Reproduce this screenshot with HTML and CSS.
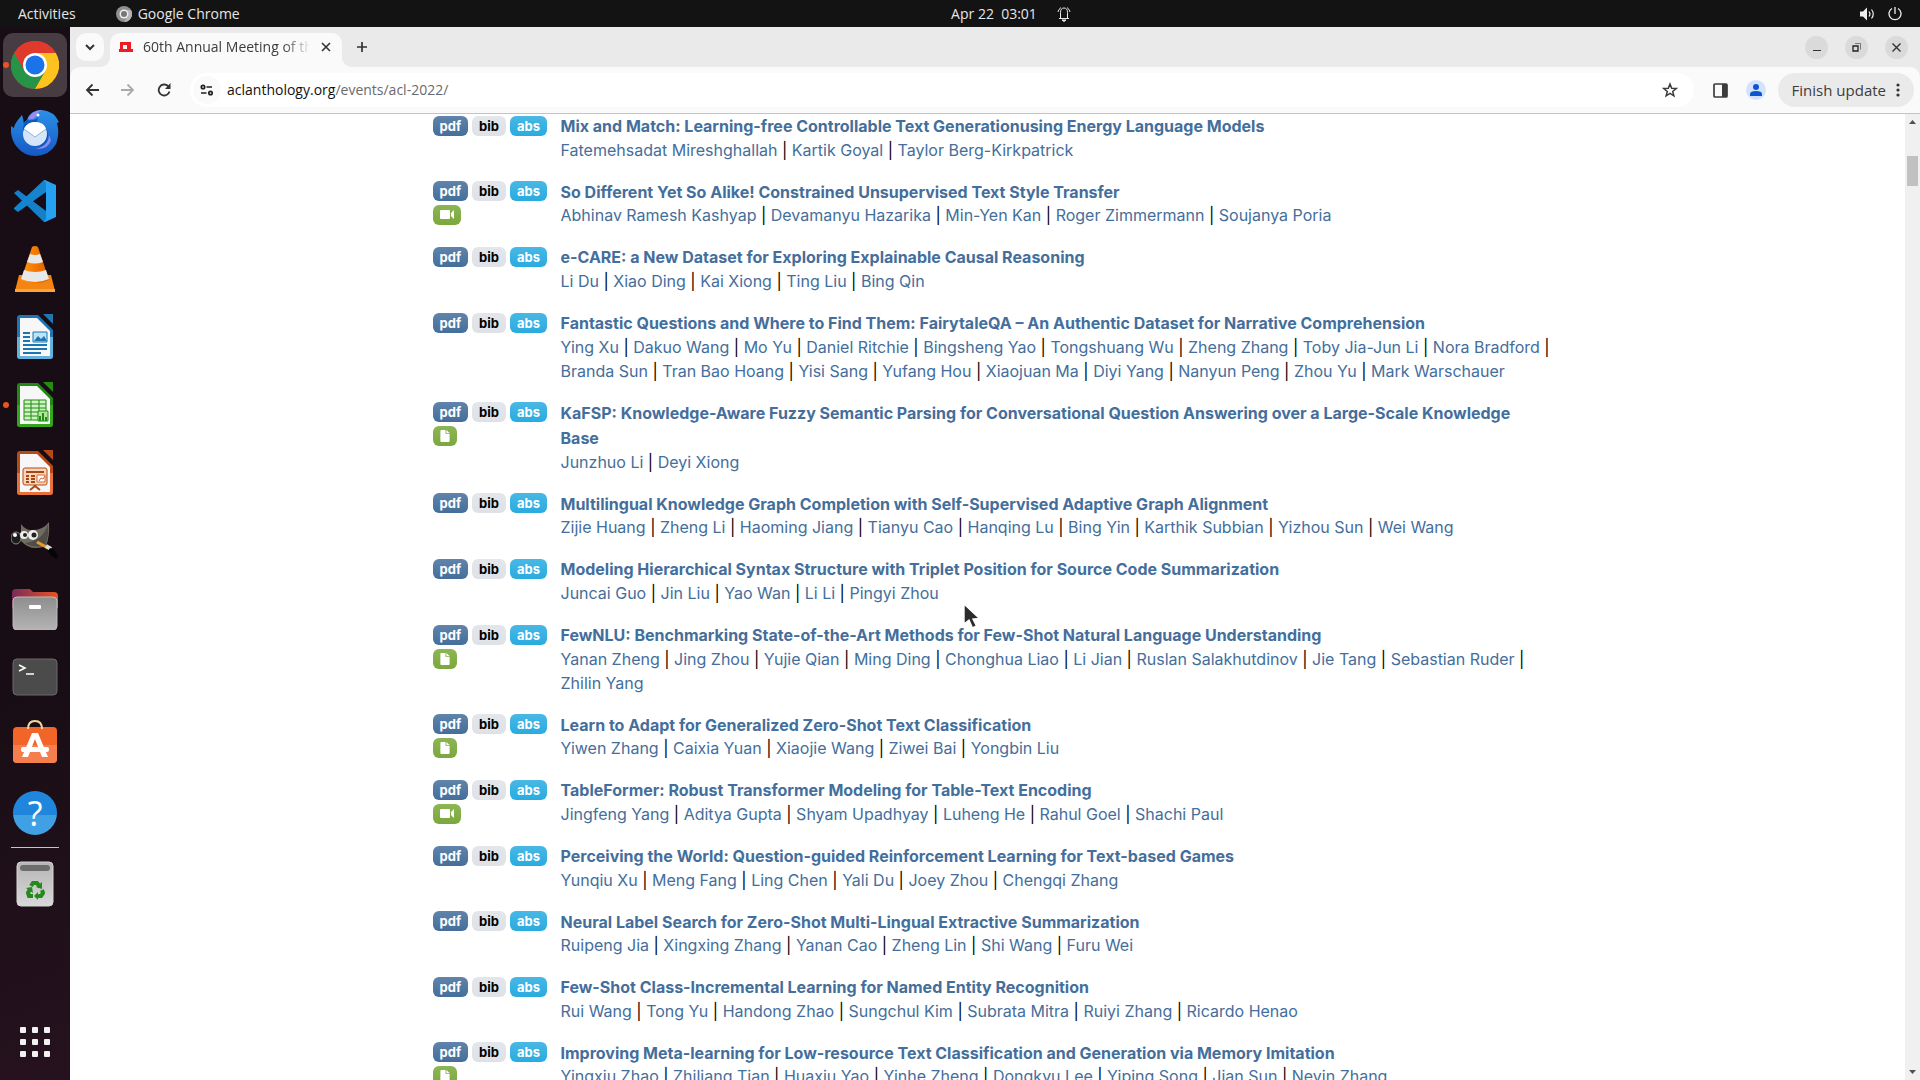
FILE: index.html
```
<!DOCTYPE html>
<html lang="en">
<head>
    <meta charset="UTF-8">
    <meta name="viewport" content="width=device-width, initial-scale=1.0">
    <title>60th Annual Meeting of the Association for Computational Linguistics</title>
    <link rel="stylesheet" href="styles.css">
</head>
<body>
    <!-- shared icons -->
    <svg class="defs" width="0" height="0">
        <symbol id="video" viewBox="0 0 14 12"><path d="M1 1h8a1 1 0 0 1 1 1v7a1 1 0 0 1-1 1H1a1 1 0 0 1-1-1V2a1 1 0 0 1 1-1zM11 4l3-3v9l-3-3z" fill="#fff"/></symbol>
        <symbol id="file" viewBox="0 0 10 13"><path d="M1 0h4.500v4H10v8a1 1 0 0 1-1 1H1a1 1 0 0 1-1-1V1a1 1 0 0 1 1-1zM6.500 0L10 3.200H6.500z" fill="#fff"/></symbol>
        <linearGradient id="gBlue" x2="0" y2="1"><stop offset="0" stop-color="#2a90e8"/><stop offset="1" stop-color="#1659c4"/></linearGradient>
        <linearGradient id="gGrey" x2="0" y2="1"><stop offset="0" stop-color="#8e8e8e"/><stop offset="1" stop-color="#b4b4b4"/></linearGradient>
        <linearGradient id="gFolder"><stop offset="0" stop-color="#7a2a5c"/><stop offset="1" stop-color="#e95420"/></linearGradient>
        <linearGradient id="gBin" x2="0" y2="1"><stop offset="0" stop-color="#b5b5b5"/><stop offset="1" stop-color="#d8d8d8"/></linearGradient>
        <linearGradient id="gCone"><stop offset="0" stop-color="#ff9a1a"/><stop offset=".5" stop-color="#f57900"/><stop offset="1" stop-color="#d95f00"/></linearGradient>
    </svg>

    <header class="topbar">
        <div class="topbar-left">
            <button class="plain">Activities</button>
            <button class="plain app-menu">
                <svg width="16" height="16" viewBox="0 0 16 16"><circle cx="8" cy="8" r="8" fill="#8f8f8f"/><path d="M8 4h7a8 8 0 0 1-7 12l4-6z" fill="#b5b5b5"/><circle cx="8" cy="8" r="4.500" fill="#eee"/><circle cx="8" cy="8" r="3" fill="#777"/></svg>
                Google Chrome
            </button>
        </div>
        <button class="plain clock">
            <span>Apr 22&nbsp; 03:01</span>
            <svg width="14" height="16" viewBox="0 0 14 16" fill="none" stroke="#e8e8e8"><path d="M2 12.500h10M3.500 12V6.500a3.500 4.500 0 0 1 7 0V12M1 6a7 7 0 0 1 3-4.500M13 6a7 7 0 0 0-3-4.500"/><path d="M5 14h4l-2 1.500z" fill="#e8e8e8"/></svg>
        </button>
        <button class="plain status" aria-label="System menu">
            <svg width="16" height="14" viewBox="0 0 16 14" fill="none" stroke="#eee"><path d="M0 4.500h3l4-4v13l-4-4H0z" fill="#eee" stroke="none"/><path d="M9 4.500q2 2.500 0 5M11.500 2.500q3.500 4.500 0 9" stroke-width="1.200"/></svg>
            <svg width="14" height="14" viewBox="0 0 14 14" fill="none" stroke="#eee" stroke-width="1.300"><path d="M4 1.500a6 6 0 1 0 6 0M7 0v7"/></svg>
        </button>
    </header>

    <div class="desktop">
        <nav class="dock">
            <button class="tile active running" aria-label="Google Chrome">
                <svg width="48" height="48" viewBox="0 0 48 48"><circle cx="24" cy="24" r="24" fill="#e33b2e"/><path d="M3.200 12A24 24 0 0 0 24 48l10.400-18L24 24z" fill="#259447"/><path d="M44.800 12A24 24 0 0 1 24 48l10.400-18L24 12z" fill="#fcc31e"/><path d="M3.200 12A24 24 0 0 1 44.800 12H24L13.600 30z" fill="#e03a2d"/><circle cx="24" cy="24" r="12" fill="#fff"/><circle cx="24" cy="24" r="9.500" fill="#1a73e8"/></svg>
            </button>
            <button class="tile" aria-label="Thunderbird">
                <svg width="48" height="48" viewBox="0 0 48 48"><path d="M11 6Q3 15 3 19L0 17Q-1 30 6 38Q13 47 25 47Q39 46 45 35Q49 25 46 14L48 13Q43 2 31 1Q19 1 16 11Q10 15 12 22Q14 14 11 6z" fill="url(#gBlue)"/><path d="M17 10Q21 1 31 1Q26 3 25 8Q22 11 17 10z" fill="#9a8af0"/><path d="M16 11Q24 12 27 8L26 13L34 18Q39 24 36 32Q31 41 20 35Q12 29 12 21Q12 14 16 11z" fill="#0d58bd"/><path d="M38 26Q38 37 24 40Q37 41 40 31z" fill="#8d8cf0"/><circle cx="24" cy="25" r="12" fill="#d5e6fa"/><path d="M13 20L24 28L35 20Q33 13 24 13Q16 13 13 20z" fill="#fff"/><path d="M13 20L24 28L35 20" fill="none" stroke="#8cb3df"/><circle cx="27" cy="6" r="1.500" fill="#fff"/></svg>
            </button>
            <button class="tile" aria-label="Visual Studio Code">
                <svg width="42" height="42" viewBox="0 0 42 42"><path d="M0 13L4 10L32 31V41L30 42z" fill="#1580c8"/><path d="M0 28L30 0L32 1V12L4 32L0 29z" fill="#1584ce"/><path d="M30 0L31 0L42 5V37L31 42L30 42L32 39V3z" fill="#26a0f0"/></svg>
            </button>
            <button class="tile" aria-label="VLC">
                <svg width="40" height="46" viewBox="0 0 40 46"><path d="M4 29h32l4 16H0z" fill="#f58513"/><path d="M0 43h40v3H0z" fill="#ffa43c"/><path d="M17 1q3-2 6 0l11 33q-14 7-28 0z" fill="url(#gCone)"/><path d="M15 8q5 2 10 0l3 8q-8 3-16 0zM9 24q11 4 22 0l3 9q-14 6-28 0z" fill="#e8e8e8"/></svg>
            </button>
            <button class="tile" aria-label="LibreOffice Writer">
                <svg width="38" height="46" viewBox="0 0 38 46"><path d="M4 1h18l15 15v26q0 3-3 3H4q-3 0-3-3V4q0-3 3-3z" fill="#1c76b5"/><path d="M1 23h36v19q0 3-3 3H4q-3 0-3-3z" fill="#63b2dd"/><path d="M4 4h17l13 13v25H4z" fill="#f7f7f7"/><path d="M27 0h10v10z" fill="#2377b1"/><path d="M7 19h7M7 23h7M7 27h7M7 31h24M7 35h24M7 39h18" stroke="#1d74b3" stroke-width="2"/><path d="M17 18h14v10H17z" fill="#bce3f8" stroke="#1d74b3"/><path d="M18 27l4-5 3 3 3-3 3 5z" fill="#1d74b3"/></svg>
            </button>
            <button class="tile running" aria-label="LibreOffice Calc">
                <svg width="38" height="46" viewBox="0 0 38 46"><path d="M4 1h18l15 15v26q0 3-3 3H4q-3 0-3-3V4q0-3 3-3z" fill="#228a10"/><path d="M1 23h36v19q0 3-3 3H4q-3 0-3-3z" fill="#35a51c"/><path d="M4 4h17l13 13v25H4z" fill="#f7f7f7"/><path d="M27 0h10v10z" fill="#278d11"/><path d="M8 18h22v20H8zM8 22h22M8 26h22M8 30h22M8 34h22M15 18v20M23 18v20" fill="#cff2c2" stroke="#238c13"/><path d="M22 29h10v10H22z" fill="#aee69a" stroke="#238c13"/><path d="M24 39v-5M27 39v-8M30 39v-4" stroke="#238c13" stroke-width="2"/></svg>
            </button>
            <button class="tile" aria-label="LibreOffice Impress">
                <svg width="38" height="46" viewBox="0 0 38 46"><path d="M4 1h18l15 15v26q0 3-3 3H4q-3 0-3-3V4q0-3 3-3z" fill="#b84a14"/><path d="M1 23h36v19q0 3-3 3H4q-3 0-3-3z" fill="#e8703a"/><path d="M4 4h17l13 13v25H4z" fill="#f7f7f7"/><path d="M27 0h10v10z" fill="#b34b19"/><rect x="7" y="18" width="24" height="17" rx="2" fill="#f8d5bb" stroke="#b34b19"/><path d="M10 22h18M14 40l5-4 5 4M19 35v2" fill="none" stroke="#a94614" stroke-width="2"/><path d="M10 26h3M10 29h3M10 32h3M15 26h4M15 29h4M15 32h4" stroke="#a94614" stroke-width="2"/><path d="M21 25h8v7h-8z" fill="#fff" stroke="#d46a33"/><path d="M23 31l2-3 2 1 2-3" fill="none" stroke="#d46a33"/></svg>
            </button>
            <button class="tile" aria-label="GIMP">
                <svg width="48" height="40" viewBox="0 0 48 40"><path d="M10 3Q15 10 22 9Q32 9 38 1Q39 15 35 25Q20 31 10 20z" fill="#6f6c62"/><path d="M37 3Q38 16 34 24Q23 28 14 22Q32 20 37 3z" fill="#504d46"/><ellipse cx="5" cy="17" rx="5" ry="6" fill="#1c1c1c" stroke="#888"/><circle cx="4" cy="14" r="2" fill="#fff"/><circle cx="13" cy="14" r="4" fill="#eee"/><circle cx="14" cy="14" r="2" fill="#222"/><circle cx="22" cy="14" r="5" fill="#eee"/><circle cx="23" cy="14" r="2.500" fill="#222"/><path d="M26 21l11 6" stroke="#ed9a25" stroke-width="3"/><path d="M35 25l5 3" stroke="#ddd" stroke-width="4"/><path d="M39 27q7 1 8 11q-8-2-10-8z" fill="#050505"/></svg>
            </button>
            <button class="tile" aria-label="Files">
                <svg width="46" height="42" viewBox="0 0 46 42"><path d="M4 1h14l3 3h21q4 0 4 4v12H0V5q0-4 4-4z" fill="url(#gFolder)"/><rect x="1" y="9" width="44" height="33" rx="4" fill="url(#gGrey)" stroke="#bbb"/><rect x="17" y="17" width="12" height="4" rx="1" fill="#fff"/></svg>
            </button>
            <button class="tile" aria-label="Terminal">
                <svg width="46" height="38" viewBox="0 0 46 38"><rect x="1" y="1" width="44" height="36" rx="4" fill="#4b4b4b" stroke="#6b6b6b"/><path d="M7 7l6 3-6 3M14 16h8" fill="none" stroke="#fff" stroke-width="1.500"/></svg>
            </button>
            <button class="tile" aria-label="Ubuntu Software">
                <svg width="46" height="50" viewBox="0 0 46 50"><rect x="1" y="7" width="44" height="36" rx="4" fill="#f16529"/><path d="M1 25h44v14q0 4-4 4H5q-4 0-4-4z" fill="#f47f4d"/><path d="M16 9q0-8 7-8t7 8" fill="none" stroke="#f3d9a0" stroke-width="2"/><path d="M20 13h6l10 24h-6L23 19l-7 18h-6z" fill="#fff"/><rect x="9" y="27" width="28" height="5" rx="2" fill="#fff"/></svg>
            </button>
            <button class="tile help" aria-label="Help">?</button>
            <hr>
            <button class="tile" aria-label="Trash">
                <svg width="38" height="46" viewBox="0 0 38 46"><rect x="1" y="1" width="36" height="44" rx="4" fill="url(#gBin)" stroke="#d5d5d5"/><rect x="4" y="4" width="30" height="6" rx="3" fill="#6d6d6d"/><g fill="none" stroke="#26891c" stroke-width="4"><path d="M15 25l2-3h4l3 4"/><path d="M26 29l1 3-2 3h-4"/><path d="M17 35h-4l-1-3 2-4"/></g><path d="M26 21v7l-6-2zM22 31v8l-4-4zM10 27l6-1 1 6z" fill="#26891c"/></svg>
            </button>
            <button class="tile apps" aria-label="Show Applications">
                <svg width="30" height="30" viewBox="0 0 30 30" fill="#f2f2f2"><rect width="6" height="6" rx="1"/><rect x="12" width="6" height="6" rx="1"/><rect x="24" width="6" height="6" rx="1"/><rect y="12" width="6" height="6" rx="1"/><rect x="12" y="12" width="6" height="6" rx="1"/><rect x="24" y="12" width="6" height="6" rx="1"/><rect y="24" width="6" height="6" rx="1"/><rect x="12" y="24" width="6" height="6" rx="1"/><rect x="24" y="24" width="6" height="6" rx="1"/></svg>
            </button>
        </nav>

        <div class="window">
            <div class="tabstrip">
                <button class="tab-search" aria-label="Search tabs"><svg width="10" height="8" viewBox="0 0 10 8"><path d="M1 2l4 4 4-4" fill="none" stroke="#333" stroke-width="2"/></svg></button>
                <div class="tab">
                    <svg width="14" height="10" viewBox="0 0 14 10"><path d="M1 0h11v7h2v3H0V7h1zM4 3v4h4V3z" fill="#ed1c24" fill-rule="evenodd"/></svg>
                    <span class="tab-title">60th Annual Meeting of the Association</span>
                    <button class="plain" aria-label="Close tab"><svg width="10" height="10" viewBox="0 0 10 10"><path d="M1 1l8 8M9 1L1 9" stroke="#333" stroke-width="1.600"/></svg></button>
                </div>
                <button class="plain new-tab" aria-label="New tab"><svg width="12" height="12" viewBox="0 0 12 12"><path d="M6 1v10M1 6h10" stroke="#333" stroke-width="1.700"/></svg></button>
                <div class="window-buttons">
                    <button aria-label="Minimize"><svg width="9" height="9" viewBox="0 0 9 9"><path d="M1 7.500h8" stroke="#333"/></svg></button>
                    <button aria-label="Restore"><svg width="9" height="9" viewBox="0 0 9 9" fill="none"><path d="M1 3h5v5H1z" stroke="#222" stroke-width="1.300"/><path d="M3 .500h5.500v6" stroke="#777"/></svg></button>
                    <button aria-label="Close"><svg width="9" height="9" viewBox="0 0 9 9"><path d="M.500 .500l8 8M8.500 .500l-8 8" stroke="#333" stroke-width="1.400"/></svg></button>
                </div>
            </div>

            <div class="toolbar">
                <button class="plain nav" aria-label="Back"><svg width="14" height="14" viewBox="0 0 14 14"><path d="M14 7H2M7.500 1.500L2 7l5.500 5.500" fill="none" stroke="#333" stroke-width="1.800"/></svg></button>
                <button class="plain nav" aria-label="Forward"><svg width="14" height="14" viewBox="0 0 14 14"><path d="M0 7h12M6.500 1.500L12 7l-5.500 5.500" fill="none" stroke="#aaa" stroke-width="1.800"/></svg></button>
                <button class="plain nav" aria-label="Reload"><svg width="14" height="14" viewBox="0 0 14 14"><path d="M12.500 8.500A5.500 5.500 0 1 1 11 3l1.500 2" fill="none" stroke="#333" stroke-width="1.800"/><path d="M13.500 0v6H8z" fill="#333"/></svg></button>
                <div class="omnibox">
                    <button class="site-info" aria-label="View site information"><svg width="14" height="12" viewBox="0 0 14 12" fill="none" stroke="#1f1f1f" stroke-width="1.700"><circle cx="3" cy="3" r="1.700"/><path d="M6.500 3H12M1 9h5.500"/><circle cx="10.500" cy="9" r="1.700"/></svg></button>
                    <a class="url" href="#"><b>aclanthology.org</b>/events/acl-2022/</a>
                    <button class="plain star" aria-label="Bookmark this tab"><svg width="16" height="16" viewBox="0 0 16 16"><path d="M8 2l1.700 4.200 4.500.300-3.500 2.900 1.200 4.400L8 11.400l-3.900 2.400 1.200-4.400-3.500-2.900 4.500-.300z" fill="none" stroke="#3c3c3c" stroke-width="1.500"/></svg></button>
                </div>
                <button class="plain panel" aria-label="Side panel"><svg width="15" height="15" viewBox="0 0 15 15"><rect x="1" y="1" width="13" height="13" rx="1" fill="none" stroke="#3c3c3c" stroke-width="1.700"/><path d="M9 1h5v13H9z" fill="#3c3c3c"/></svg></button>
                <button class="plain" aria-label="Profile"><svg width="20" height="20" viewBox="0 0 20 20"><circle cx="10" cy="10" r="10" fill="#d3e3fd"/><circle cx="10" cy="7" r="3" fill="#0b57d0"/><path d="M4 16v-2q0-3 6-3t6 3v2z" fill="#0b57d0"/></svg></button>
                <button class="update">Finish update <svg width="4" height="14" viewBox="0 0 4 14" fill="#333"><circle cx="2" cy="2" r="1.600"/><circle cx="2" cy="7" r="1.600"/><circle cx="2" cy="12" r="1.600"/></svg></button>
            </div>

            <div class="viewport">
                <main class="page">
                    <div class="container">
                        <div class="paper">
                            <div class="badges"><a class="badge pdf" href="#">pdf</a><a class="badge bib" href="#">bib</a><a class="badge abs" href="#">abs</a></div>
                            <div class="info"><strong><a href="#">Mix and Match: Learning-free Controllable Text Generationusing Energy Language Models</a></strong><br><a href="#">Fatemehsadat Mireshghallah</a> | <a href="#">Kartik Goyal</a> | <a href="#">Taylor Berg-Kirkpatrick</a></div>
                        </div>
                        <div class="paper">
                            <div class="badges"><a class="badge pdf" href="#">pdf</a><a class="badge bib" href="#">bib</a><a class="badge abs" href="#">abs</a><br><a class="badge att" href="#" aria-label="video"><svg width="14" height="12"><use href="#video"/></svg></a></div>
                            <div class="info"><strong><a href="#">So Different Yet So Alike! Constrained Unsupervised Text Style Transfer</a></strong><br><a href="#">Abhinav Ramesh Kashyap</a> | <a href="#">Devamanyu Hazarika</a> | <a href="#">Min-Yen Kan</a> | <a href="#">Roger Zimmermann</a> | <a href="#">Soujanya Poria</a></div>
                        </div>
                        <div class="paper">
                            <div class="badges"><a class="badge pdf" href="#">pdf</a><a class="badge bib" href="#">bib</a><a class="badge abs" href="#">abs</a></div>
                            <div class="info"><strong><a href="#">e-CARE: a New Dataset for Exploring Explainable Causal Reasoning</a></strong><br><a href="#">Li Du</a> | <a href="#">Xiao Ding</a> | <a href="#">Kai Xiong</a> | <a href="#">Ting Liu</a> | <a href="#">Bing Qin</a></div>
                        </div>
                        <div class="paper">
                            <div class="badges"><a class="badge pdf" href="#">pdf</a><a class="badge bib" href="#">bib</a><a class="badge abs" href="#">abs</a></div>
                            <div class="info"><strong><a href="#">Fantastic Questions and Where to Find Them: FairytaleQA – An Authentic Dataset for Narrative Comprehension</a></strong><br><a href="#">Ying Xu</a> | <a href="#">Dakuo Wang</a> | <a href="#">Mo Yu</a> | <a href="#">Daniel Ritchie</a> | <a href="#">Bingsheng Yao</a> | <a href="#">Tongshuang Wu</a> | <a href="#">Zheng Zhang</a> | <a href="#">Toby Jia-Jun Li</a> | <a href="#">Nora Bradford</a> | <a href="#">Branda Sun</a> | <a href="#">Tran Bao Hoang</a> | <a href="#">Yisi Sang</a> | <a href="#">Yufang Hou</a> | <a href="#">Xiaojuan Ma</a> | <a href="#">Diyi Yang</a> | <a href="#">Nanyun Peng</a> | <a href="#">Zhou Yu</a> | <a href="#">Mark Warschauer</a></div>
                        </div>
                        <div class="paper">
                            <div class="badges"><a class="badge pdf" href="#">pdf</a><a class="badge bib" href="#">bib</a><a class="badge abs" href="#">abs</a><br><a class="badge att" href="#" aria-label="software"><svg width="10" height="12"><use href="#file"/></svg></a></div>
                            <div class="info"><strong><a href="#">KaFSP: Knowledge-Aware Fuzzy Semantic Parsing for Conversational Question Answering over a Large-Scale Knowledge Base</a></strong><br><a href="#">Junzhuo Li</a> | <a href="#">Deyi Xiong</a></div>
                        </div>
                        <div class="paper">
                            <div class="badges"><a class="badge pdf" href="#">pdf</a><a class="badge bib" href="#">bib</a><a class="badge abs" href="#">abs</a></div>
                            <div class="info"><strong><a href="#">Multilingual Knowledge Graph Completion with Self-Supervised Adaptive Graph Alignment</a></strong><br><a href="#">Zijie Huang</a> | <a href="#">Zheng Li</a> | <a href="#">Haoming Jiang</a> | <a href="#">Tianyu Cao</a> | <a href="#">Hanqing Lu</a> | <a href="#">Bing Yin</a> | <a href="#">Karthik Subbian</a> | <a href="#">Yizhou Sun</a> | <a href="#">Wei Wang</a></div>
                        </div>
                        <div class="paper">
                            <div class="badges"><a class="badge pdf" href="#">pdf</a><a class="badge bib" href="#">bib</a><a class="badge abs" href="#">abs</a></div>
                            <div class="info"><strong><a href="#">Modeling Hierarchical Syntax Structure with Triplet Position for Source Code Summarization</a></strong><br><a href="#">Juncai Guo</a> | <a href="#">Jin Liu</a> | <a href="#">Yao Wan</a> | <a href="#">Li Li</a> | <a href="#">Pingyi Zhou</a></div>
                        </div>
                        <div class="paper">
                            <div class="badges"><a class="badge pdf" href="#">pdf</a><a class="badge bib" href="#">bib</a><a class="badge abs" href="#">abs</a><br><a class="badge att" href="#" aria-label="software"><svg width="10" height="12"><use href="#file"/></svg></a></div>
                            <div class="info"><strong><a href="#">FewNLU: Benchmarking State-of-the-Art Methods for Few-Shot Natural Language Understanding</a></strong><br><a href="#">Yanan Zheng</a> | <a href="#">Jing Zhou</a> | <a href="#">Yujie Qian</a> | <a href="#">Ming Ding</a> | <a href="#">Chonghua Liao</a> | <a href="#">Li Jian</a> | <a href="#">Ruslan Salakhutdinov</a> | <a href="#">Jie Tang</a> | <a href="#">Sebastian Ruder</a> | <a href="#">Zhilin Yang</a></div>
                        </div>
                        <div class="paper">
                            <div class="badges"><a class="badge pdf" href="#">pdf</a><a class="badge bib" href="#">bib</a><a class="badge abs" href="#">abs</a><br><a class="badge att" href="#" aria-label="software"><svg width="10" height="12"><use href="#file"/></svg></a></div>
                            <div class="info"><strong><a href="#">Learn to Adapt for Generalized Zero-Shot Text Classification</a></strong><br><a href="#">Yiwen Zhang</a> | <a href="#">Caixia Yuan</a> | <a href="#">Xiaojie Wang</a> | <a href="#">Ziwei Bai</a> | <a href="#">Yongbin Liu</a></div>
                        </div>
                        <div class="paper">
                            <div class="badges"><a class="badge pdf" href="#">pdf</a><a class="badge bib" href="#">bib</a><a class="badge abs" href="#">abs</a><br><a class="badge att" href="#" aria-label="video"><svg width="14" height="12"><use href="#video"/></svg></a></div>
                            <div class="info"><strong><a href="#">TableFormer: Robust Transformer Modeling for Table-Text Encoding</a></strong><br><a href="#">Jingfeng Yang</a> | <a href="#">Aditya Gupta</a> | <a href="#">Shyam Upadhyay</a> | <a href="#">Luheng He</a> | <a href="#">Rahul Goel</a> | <a href="#">Shachi Paul</a></div>
                        </div>
                        <div class="paper">
                            <div class="badges"><a class="badge pdf" href="#">pdf</a><a class="badge bib" href="#">bib</a><a class="badge abs" href="#">abs</a></div>
                            <div class="info"><strong><a href="#">Perceiving the World: Question-guided Reinforcement Learning for Text-based Games</a></strong><br><a href="#">Yunqiu Xu</a> | <a href="#">Meng Fang</a> | <a href="#">Ling Chen</a> | <a href="#">Yali Du</a> | <a href="#">Joey Zhou</a> | <a href="#">Chengqi Zhang</a></div>
                        </div>
                        <div class="paper">
                            <div class="badges"><a class="badge pdf" href="#">pdf</a><a class="badge bib" href="#">bib</a><a class="badge abs" href="#">abs</a></div>
                            <div class="info"><strong><a href="#">Neural Label Search for Zero-Shot Multi-Lingual Extractive Summarization</a></strong><br><a href="#">Ruipeng Jia</a> | <a href="#">Xingxing Zhang</a> | <a href="#">Yanan Cao</a> | <a href="#">Zheng Lin</a> | <a href="#">Shi Wang</a> | <a href="#">Furu Wei</a></div>
                        </div>
                        <div class="paper">
                            <div class="badges"><a class="badge pdf" href="#">pdf</a><a class="badge bib" href="#">bib</a><a class="badge abs" href="#">abs</a></div>
                            <div class="info"><strong><a href="#">Few-Shot Class-Incremental Learning for Named Entity Recognition</a></strong><br><a href="#">Rui Wang</a> | <a href="#">Tong Yu</a> | <a href="#">Handong Zhao</a> | <a href="#">Sungchul Kim</a> | <a href="#">Subrata Mitra</a> | <a href="#">Ruiyi Zhang</a> | <a href="#">Ricardo Henao</a></div>
                        </div>
                        <div class="paper">
                            <div class="badges"><a class="badge pdf" href="#">pdf</a><a class="badge bib" href="#">bib</a><a class="badge abs" href="#">abs</a><br><a class="badge att" href="#" aria-label="software"><svg width="10" height="12"><use href="#file"/></svg></a></div>
                            <div class="info"><strong><a href="#">Improving Meta-learning for Low-resource Text Classification and Generation via Memory Imitation</a></strong><br><a href="#">Yingxiu Zhao</a> | <a href="#">Zhiliang Tian</a> | <a href="#">Huaxiu Yao</a> | <a href="#">Yinhe Zheng</a> | <a href="#">Dongkyu Lee</a> | <a href="#">Yiping Song</a> | <a href="#">Jian Sun</a> | <a href="#">Nevin Zhang</a></div>
                        </div>
                    </div>
                </main>
                <div class="scrollbar">
                    <svg width="7" height="4" viewBox="0 0 7 4"><path d="M0 4L3.500 0L7 4z" fill="#505050"/></svg>
                    <div class="track"><div class="thumb"></div></div>
                    <svg width="7" height="4" viewBox="0 0 7 4"><path d="M0 0L3.500 4L7 0z" fill="#505050"/></svg>
                </div>
            </div>
        </div>
    </div>

    <svg class="cursor" width="18" height="28" viewBox="0 0 18 28"><path d="M1 1v20l5-4 3.500 8 4-2-3.500-7 6.500-.500z" fill="#2b2b2b" stroke="#fff" stroke-width="1.400"/></svg>
</body>
</html>
```
FILE: styles.css
```
* {
    box-sizing: border-box;
}

html, body {
    height: 100%;
    margin: 0;
}

body {
    display: flex;
    flex-direction: column;
    overflow: hidden;
    font-family: "Open Sans", "Noto Sans", sans-serif;
    font-size: 14px;
    background-color: #1b0f16;
}

button {
    display: flex;
    align-items: center;
    justify-content: center;
    padding: 0;
    border: none;
    font: inherit;
    color: inherit;
}

svg {
    display: block;
    flex: none;
}

.defs, .cursor {
    position: absolute;
}

.cursor {
    left: 963px;
    top: 603px;
}

.plain {
    background: none;
}

/* top bar */
.topbar {
    display: grid;
    grid-template-columns: 1fr auto 1fr;
    align-items: center;
    flex: none;
    height: 27px;
    padding: 0 18px;
    background-color: #131313;
    color: #e6e6e6;
}

.topbar-left {
    display: flex;
    gap: 40px;
}

.app-menu {
    gap: 6px;
}

.clock {
    gap: 20px;
    padding-left: 102px;
}

.status {
    justify-self: end;
    gap: 12px;
}

.desktop {
    display: flex;
    flex: 1;
    min-height: 0;
}

/* dock */
.dock {
    display: flex;
    flex-direction: column;
    align-items: center;
    gap: 4px;
    flex: none;
    width: 70px;
    padding: 6px 0;
    background: linear-gradient(160deg, #180d14 60%, #25121e);
}

.tile {
    position: relative;
    flex: none;
    width: 64px;
    height: 64px;
    border-radius: 10px;
    background: none;
}

.tile.active {
    background-color: #463c42;
}

.tile.running::before {
    content: "";
    position: absolute;
    left: 0;
    width: 6px;
    height: 6px;
    border-radius: 50%;
    background-color: #e95420;
}

.help {
    width: 44px;
    height: 44px;
    margin: 10px 0;
    border-radius: 50%;
    background: linear-gradient(#1f86dc 54%, #3fa0e4 54%);
    color: white;
    font-size: 34px;
}

.dock hr {
    width: 48px;
    height: 1px;
    margin: -2px 0 0;
    border: none;
    background-color: #c8c4c6;
}

.apps {
    margin-top: auto;
}

/* browser window */
.window {
    display: flex;
    flex-direction: column;
    flex: 1;
    min-width: 0;
    background-color: #eaeaea;
    color: #3c3c3c;
}

.tabstrip {
    display: flex;
    align-items: center;
    flex: none;
    height: 40px;
    padding: 0 12px 0 6px;
}

.tab-search {
    width: 28px;
    height: 28px;
    margin-right: 6px;
    border-radius: 10px;
    background-color: #fafafa;
}

.tab {
    position: relative;
    display: flex;
    align-items: center;
    align-self: flex-end;
    width: 232px;
    height: 34px;
    padding: 0 11px 6px 9px;
    border-radius: 10px 10px 0 0;
    background-color: #fafafa;
}

.tab::before, .tab::after {
    content: "";
    position: absolute;
    bottom: 0;
    width: 10px;
    height: 10px;
}

.tab::before {
    right: 100%;
    background: radial-gradient(circle at 0 0, transparent 10px, #fafafa 10px);
}

.tab::after {
    left: 100%;
    background: radial-gradient(circle at 100% 0, transparent 10px, #fafafa 10px);
}

.tab-title {
    flex: 1;
    margin: 0 12px 0 10px;
    padding-bottom: 2px;
    overflow: hidden;
    white-space: nowrap;
    -webkit-mask-image: linear-gradient(to right, black 140px, transparent 168px);
    mask-image: linear-gradient(to right, black 140px, transparent 168px);
}

.new-tab {
    margin-left: 14px;
}

.window-buttons {
    display: flex;
    gap: 17px;
    margin-left: auto;
}

.window-buttons button {
    width: 23px;
    height: 23px;
    border-radius: 50%;
    background-color: #dadada;
}

.toolbar {
    display: flex;
    align-items: center;
    flex: none;
    height: 47px;
    padding: 0 6px 0 15px;
    border-bottom: 1px solid #c4c4c4;
    border-radius: 10px 10px 0 0;
    background-color: #fafafa;
}

.nav {
    width: 14px;
    margin-right: 22px;
}

.omnibox {
    display: flex;
    align-items: center;
    flex: 1;
    height: 34px;
    margin-right: 19px;
    margin-left: -3px;
    padding: 0 16px 0 3px;
    border-radius: 17px;
    background-color: white;
}

.site-info {
    width: 28px;
    height: 28px;
    margin-right: 6px;
    border-radius: 50%;
    background-color: #fafafa;
}

.url {
    flex: 1;
    padding-bottom: 2px;
    color: #6a6a6a;
    text-decoration: none;
}

.url b {
    font-weight: normal;
    color: #111;
}

.panel {
    margin-right: 18px;
}

.update {
    gap: 10px;
    height: 34px;
    margin-left: 12px;
    padding: 0 14px;
    border-radius: 17px;
    background-color: #eaeaea;
    font-size: 15px;
}

/* page */
.viewport {
    display: flex;
    flex: 1;
    min-height: 0;
    background-color: white;
}

.page {
    flex: 1;
    overflow: hidden;
    font-family: Inter, sans-serif;
    font-size: 16px;
    line-height: 24px;
    color: black;
}

.container {
    max-width: 1140px;
    margin: -2px auto 0;
    padding: 0 15px;
}

.paper {
    display: flex;
    margin-bottom: 16px;
}

.badges {
    flex: none;
    width: 120px;
    margin-right: 8px;
    white-space: nowrap;
}

.info {
    margin-right: -8px;
}

.info a {
    color: #446e9b;
    text-decoration: none;
}

.info strong a {
    vertical-align: middle;
}

.badge {
    display: inline-block;
    margin-right: 4px;
    padding: 4px 7px;
    border-radius: 6px;
    font-size: 13px;
    font-weight: bold;
    line-height: 12px;
    vertical-align: middle;
    color: white;
    text-decoration: none;
}

.pdf {
    background: linear-gradient(#6084ab, #446e9b);
}

.bib {
    background: linear-gradient(#e3e6ea, #dee2e6);
    color: black;
}

.abs {
    background: linear-gradient(#49b8e5, #29abe0);
}

.att {
    background: linear-gradient(#8db654, #7ba73c);
}

/* scrollbar */
.scrollbar {
    display: flex;
    flex-direction: column;
    align-items: center;
    flex: none;
    width: 15px;
    padding: 6px 0;
    background-color: #f0f0f0;
}

.track {
    flex: 1;
    padding-top: 32px;
}

.thumb {
    width: 11px;
    height: 30px;
    background-color: #c1c1c1;
}
```
